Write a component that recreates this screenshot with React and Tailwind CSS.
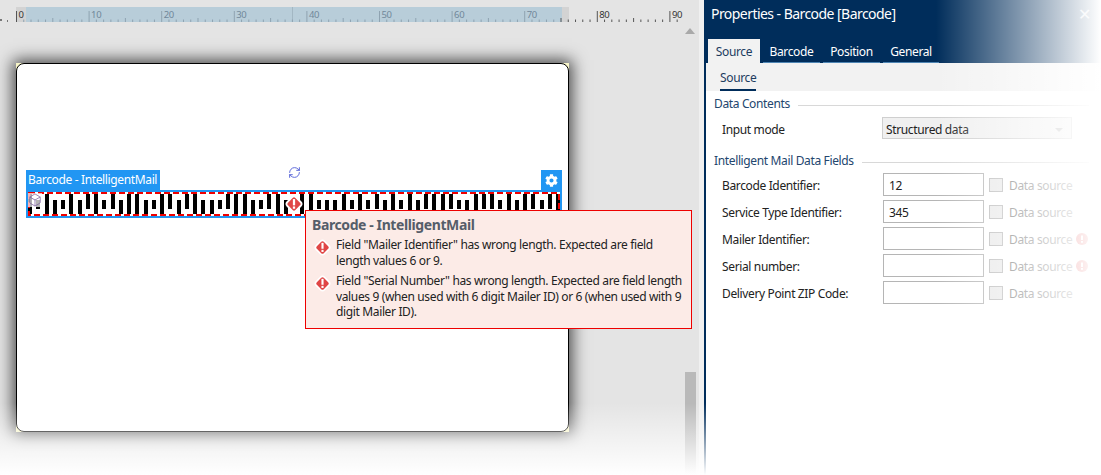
import { RefreshCw, Box } from 'lucide-react';
import { FaCog } from 'react-icons/fa';

const barPattern = 'FTFDTFDAFTADFFDTFADAFDDTAFFDTAFDTFFTDDFTFTADFTFDAFFATDFAATFDFATAF';

const rows = [
  { label: 'Barcode Identifier:', value: '12' },
  { label: 'Service Type Identifier:', value: '345' },
  { label: 'Mailer Identifier:', value: '', warn: true },
  { label: 'Serial number:', value: '', warn: true },
  { label: 'Delivery Point ZIP Code:', value: '' },
];

function ErrorIcon({ size = 16, className = '' }) {
  return (
    <svg width={size} height={size} viewBox="0 0 16 16" className={className}>
      <rect x="2.6" y="2.6" width="10.8" height="10.8" rx="2.5" transform="rotate(45 8 8)" fill="#e04646" stroke="#fff" strokeWidth="1.6" />
      <rect x="7" y="3.6" width="2" height="5.6" fill="#fff" />
      <rect x="7" y="10.2" width="2" height="2" fill="#fff" />
    </svg>
  );
}

function Ruler() {
  const ticks = [];
  for (let i = 0; i <= 95; i++) {
    const x = 16.5 + i * 7.26;
    if (x > 682) break;
    const major = i % 10 === 0;
    const mid = i % 5 === 0;
    ticks.push(
      <line
        key={i}
        x1={x}
        x2={x}
        y1={major ? 11 : mid ? 18 : 19.5}
        y2="22"
        stroke={i > 0 && i < 75 ? '#8fa3b1' : '#555'}
        strokeWidth="1"
      />
    );
  }
  return (
    <svg width="699" height="22" className="block shrink-0">
      <rect x="16" y="7" width="553" height="15" fill="#d3d3d3" />
      <rect x="26" y="7" width="536" height="15" fill="#b8cdd9" />
      <rect x="292" y="7" width="1" height="15" fill="#a3b7c3" />
      {ticks}
      {[0, 10, 20, 30, 40, 50, 60, 70, 80, 90].map((n) => (
        <text
          key={n}
          x={18.5 + n * 7.26}
          y="18"
          fontSize="9.5"
          fontFamily="'Noto Sans', sans-serif"
          fill={n === 0 || n >= 80 ? '#333' : '#71889a'}
        >
          {n}
        </text>
      ))}
      <rect x="0" y="19" width="2" height="2" fill="#777" />
      <rect x="7" y="20" width="1" height="2" fill="#777" />
    </svg>
  );
}

function Bars() {
  return (
    <svg width="532" height="24" className="block">
      {barPattern.split('').map((c, i) => {
        const x = Math.round(i * 8.25);
        const top = c === 'F' || c === 'A' ? 2 : 8;
        const bottom = c === 'F' || c === 'D' ? 22 : 17;
        return <rect key={i} x={x} y={top} width="4" height={bottom - top} fill="#000" />;
      })}
      <rect x="1" y="1" width="530" height="22" fill="none" stroke="#f00000" strokeWidth="2" strokeDasharray="6 3" />
    </svg>
  );
}

function Tab({ label, active, width }) {
  return (
    <div
      style={{ width }}
      className={
        active
          ? 'flex h-[24px] items-center justify-center bg-[#f2f2f2] pt-[2px] text-[#1d3c5f]'
          : 'flex h-[24px] items-center justify-center border-b border-[#4f86b4] pt-[2px] text-white'
      }
    >
      {label}
    </div>
  );
}

function SectionTitle({ children }) {
  return (
    <div className="flex items-center gap-[8px] text-[#23466e]">
      <span>{children}</span>
      <div className="mt-[2px] h-px flex-1 bg-[#d8d8d8]" />
    </div>
  );
}

export default function App() {
  return (
    <div className="relative flex h-[475px] w-[1101px] overflow-hidden bg-white text-[12px] tracking-[-0.36px] text-[#222] [font-family:'Noto_Sans',sans-serif]">
      <section className="relative h-full w-[699px] shrink-0 bg-[#e4e4e4]">
        <Ruler />
        <div className="ml-[16px] mt-[41px] h-[369px] w-[553px] bg-[#f7f5c8] shadow-[0_0_15px_3px_rgba(0,0,0,0.7)]">
          <div className="h-full rounded-[8px] border border-black bg-white px-[9px] pt-[106px]">
            <div className="grid h-[20px] w-[536px] grid-cols-[1fr_auto_1fr]">
              <div className="flex h-[20px] w-[134px] items-center whitespace-nowrap bg-[#2196f3] pl-[2px] text-white">Barcode - IntelligentMail</div>
              <RefreshCw size={13} strokeWidth={1.8} className="mt-[-4px] text-[#5b68d8]" />
              <div className="flex h-[20px] w-[21px] items-center justify-center justify-self-end bg-[#2196f3]">
                <FaCog size={13} className="text-white" />
              </div>
            </div>
            <div className="w-[536px] border-2 border-[#2196f3] bg-white">
              <Bars />
            </div>
          </div>
        </div>

        <Box size={14} strokeWidth={1.3} className="absolute left-[28px] top-[193px] bg-white/70 text-[#7a5c9e]" />
        <ErrorIcon size={18} className="absolute left-[285px] top-[195px]" />

        <div className="absolute left-[305px] top-[210px] h-[119px] w-[387px] border border-[#ee0000] bg-[#fcebe7] pl-[6px] pt-[5px]">
          <div className="text-[14px] font-bold leading-[18px] tracking-[-0.4px] text-[#555d69]">Barcode - IntelligentMail</div>
          <div className="mt-[3px] flex gap-[5px] pl-[2px] leading-[15.5px]">
            <ErrorIcon size={17} className="mt-[2px] shrink-0" />
            <p className="whitespace-nowrap">
              Field "Mailer Identifier" has wrong length. Expected are field
              <br />
              length values 6 or 9.
            </p>
          </div>
          <div className="mt-[5px] flex gap-[5px] pl-[2px] leading-[15.5px]">
            <ErrorIcon size={17} className="mt-[2px] shrink-0" />
            <p className="whitespace-nowrap">
              Field "Serial Number" has wrong length. Expected are field length
              <br />
              values 9 (when used with 6 digit Mailer ID) or 6 (when used with 9
              <br />
              digit Mailer ID).
            </p>
          </div>
        </div>

        <div className="absolute left-[685px] top-[28px] h-0 w-0 border-x-[5px] border-b-[6px] border-x-transparent border-b-[#a9a9a9]" />
        <div className="absolute left-[685px] top-[372px] h-[103px] w-[11px] bg-[#b9b9b9]" />
      </section>

      <div className="w-[5px] shrink-0 bg-[#f0f0f0]" />

      <aside className="flex h-full flex-1 flex-col border-l-2 border-[#002d5b]">
        <header className="h-[63px] shrink-0 bg-[#002d5b] pl-[2px] text-white">
          <h1 className="pl-[3px] pt-[4px] text-[14px] font-normal leading-[20px] tracking-[-0.55px]">Properties - Barcode [Barcode]</h1>
          <div className="mt-[15px] flex gap-[3px]">
            <Tab label="Source" active width={52} />
            <Tab label="Barcode" width={57} />
            <Tab label="Position" width={57} />
            <Tab label="General" width={56} />
          </div>
        </header>
        <div className="h-[28px] shrink-0 bg-[#f2f2f2] pl-[14px]">
          <span className="inline-block h-[28px] border-b-2 border-[#002d5b] pt-[7px] leading-[16px] text-[#1d3c5f]">Source</span>
        </div>
        <div className="flex-1 pl-[8px] pr-[12px] pt-[4px]">
          <SectionTitle>Data Contents</SectionTitle>
          <div className="mt-[4px] flex h-[22px] items-center pl-[8px]">
            <span className="w-[160px] pt-[3px]">Input mode</span>
            <div className="flex h-[22px] w-[190px] items-center justify-between border border-[#cfcfcf] bg-[#f0f0f0] pl-[3px] pr-[8px] pt-[3px] text-[#222]">
              <span>Structured data</span>
              <div className="h-0 w-0 border-x-[4px] border-t-[4px] border-x-transparent border-t-[#b5b5b5]" />
            </div>
          </div>
          <div className="mt-[13px]">
            <SectionTitle>Intelligent Mail Data Fields</SectionTitle>
          </div>
          <div className="mt-[3px] flex flex-col gap-[4px]">
            {rows.map((row) => (
              <div key={row.label} className="flex h-[23px] items-center pl-[8px]">
                <span className="w-[161px] pt-[2px]">{row.label}</span>
                <div className="flex h-[23px] w-[101px] items-center border border-[#b5b5b5] bg-white pl-[5px] pt-[2px]">{row.value}</div>
                <div className="ml-[5px] h-[14px] w-[14px] border border-[#b8b8b8] bg-[#e8e8e8]" />
                <span className="ml-[6px] pt-[2px] text-[#777]">Data source</span>
                {row.warn && (
                  <svg width="12" height="12" viewBox="0 0 12 12" className="ml-[4px]">
                    <circle cx="6" cy="6" r="6" fill="#e04646" />
                    <rect x="5" y="2.5" width="2" height="4.5" fill="#fff" />
                    <rect x="5" y="8" width="2" height="1.8" fill="#fff" />
                  </svg>
                )}
              </div>
            ))}
          </div>
        </div>
      </aside>

      {/* window edge fades out to white */}
      <div className="pointer-events-none absolute inset-x-0 bottom-0 h-[72px] bg-gradient-to-b from-white/0 to-white" />
      <div className="pointer-events-none absolute inset-y-0 right-0 w-[165px] bg-gradient-to-r from-white/0 to-white" />
      <div className="absolute right-[10px] top-[5px] text-[16px] leading-[18px] text-white/80">✕</div>
    </div>
  );
}
